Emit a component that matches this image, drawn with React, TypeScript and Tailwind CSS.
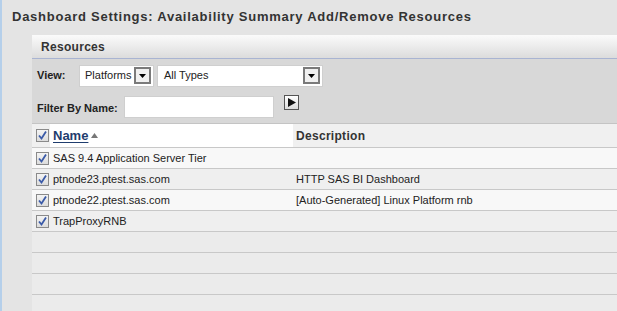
const font = "font-['Liberation_Sans',Arial,sans-serif]"

function Check() {
  return (
    <span className="w-[13px] h-[13px] border border-[#8a8a8a] bg-gradient-to-b from-[#f4f4f4] to-[#dcdcdc] flex items-center justify-center">
      <svg width="11" height="11" viewBox="0 0 11 11">
        <path d="M2 5.5 L4.5 8.5 L9 1.5" fill="none" stroke="#3a5aa8" strokeWidth="1.8" />
      </svg>
    </span>
  )
}

function DropBtn() {
  return (
    <span className="w-[17px] h-[17px] border-2 border-[#7a7a7a] bg-[#f0f0f0] flex items-center justify-center">
      <svg width="7" height="4" viewBox="0 0 7 4">
        <path d="M0 0 H7 L3.5 4 Z" fill="#000" />
      </svg>
    </span>
  )
}

const rows = [
  { name: "SAS 9.4 Application Server Tier", desc: "", bg: "bg-[#f8f8f8]" },
  { name: "ptnode23.ptest.sas.com", desc: "HTTP SAS BI Dashboard", bg: "bg-[#efefef]" },
  { name: "ptnode22.ptest.sas.com", desc: "[Auto-Generated] Linux Platform rnb", bg: "bg-[#f8f8f8]" },
  { name: "TrapProxyRNB", desc: "", bg: "bg-[#efefef]" },
]

export default function App() {
  return (
    <div className={`${font} w-[617px] h-[311px] overflow-hidden bg-[#e4e4e4] border-l-2 border-[#b5cfea] text-[#222] flex flex-col`}>
      <div className="h-[35px] shrink-0 pl-[10px] pb-[1px] flex items-center text-[13px] font-bold tracking-[0.75px] text-[#333]">
        Dashboard Settings: Availability Summary Add/Remove Resources
      </div>
      <div className="ml-[30px] flex-1 min-h-0 overflow-hidden flex flex-col">
        <div className="h-[24px] shrink-0 bg-gradient-to-b from-[#fbfbfb] to-[#dcdcdc] border-b border-[#a9b4d2] pl-[9px] flex items-center text-[12px] font-bold tracking-[0.3px] text-[#333]">
          Resources
        </div>
        <div className="h-[65px] shrink-0 bg-[#d8d8d8] flex flex-col border-b border-[#c4c4c4]">
          <div className="h-[23px] mt-[5px] flex items-center pl-[5px] text-[11px]">
            <span className="font-bold w-[42px]">View:</span>
            <div className="h-[22px] w-[75px] bg-white border border-[#cfcfcf] flex items-center pl-[5px] pr-[2px] justify-between">
              <span>Platforms</span>
              <DropBtn />
            </div>
            <div className="ml-[3px] h-[22px] w-[166px] bg-white border border-[#cfcfcf] flex items-center pl-[6px] pr-[2px] justify-between">
              <span>All Types</span>
              <DropBtn />
            </div>
          </div>
          <div className="flex items-start pl-[5px] mt-[9px] text-[11px]">
            <span className="font-bold w-[87px] mt-[4px]">Filter By Name:</span>
            <div className="h-[22px] w-[150px] bg-white border border-[#cfcfcf]" />
            <span className="ml-[10px] -mt-[1px] w-[15px] h-[15px] border border-[#555] bg-gradient-to-b from-white to-[#dcdcdc] flex items-center justify-center">
              <svg width="8" height="9" viewBox="0 0 8 9">
                <path d="M0 0 L8 4.5 L0 9 Z" fill="#111" />
              </svg>
            </span>
          </div>
        </div>
        <div className="h-[24px] shrink-0 flex border-b border-[#c8c8c8] bg-[#f0f0f0]">
          <div className="w-[18px] flex items-center justify-center bg-[#f0f0f0] pl-[2px]">
            <Check />
          </div>
          <div className="w-[243px] bg-white flex items-center pl-[3px] text-[13px] font-bold">
            <span className="text-[#1f3d6e] underline underline-offset-2">Name</span>
            <svg className="ml-[3px]" width="7" height="5" viewBox="0 0 7 5">
              <path d="M0 5 L3.5 0 L7 5 Z" fill="#777" />
            </svg>
          </div>
          <div className="flex-1 flex items-center pl-[3px] text-[12px] font-bold tracking-[0.3px] text-[#333]">
            Description
          </div>
        </div>
        {rows.map((r) => (
          <div key={r.name} className={`h-[21px] shrink-0 flex items-center border-b border-[#c8c8c8] text-[11px] ${r.bg}`}>
            <div className="w-[18px] flex items-center justify-center pl-[2px]">
              <Check />
            </div>
            <div className="w-[243px] pl-[3px]">{r.name}</div>
            <div className="flex-1 pl-[3px]">{r.desc}</div>
          </div>
        ))}
        {[0, 1, 2, 3].map((i) => (
          <div key={i} className="h-[21px] shrink-0 border-b border-[#c8c8c8] bg-[#ebebeb]" />
        ))}
      </div>
    </div>
  )
}
